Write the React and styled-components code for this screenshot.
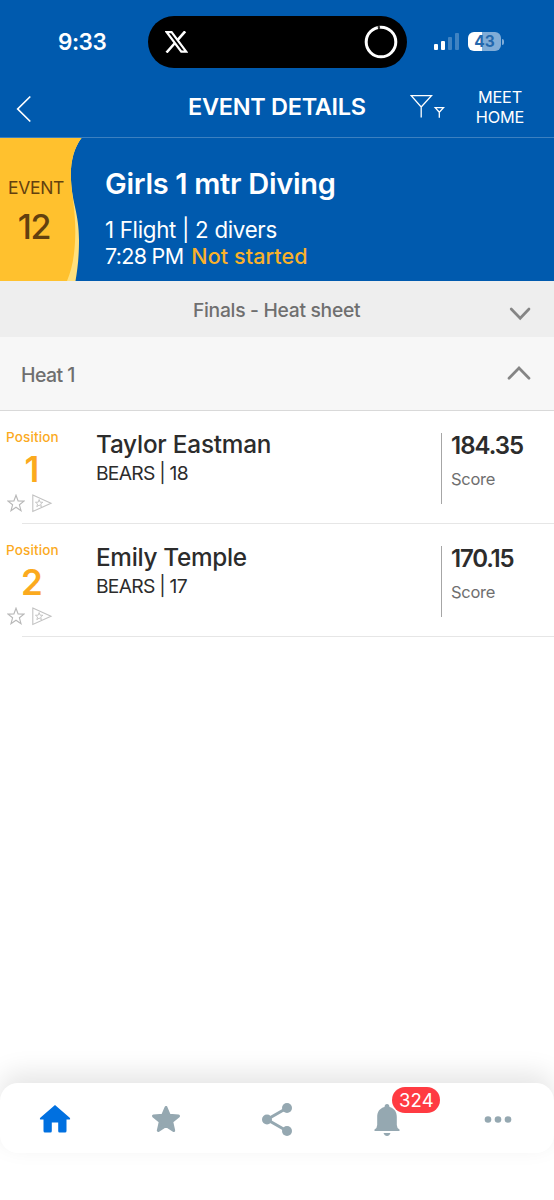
import React from "react";
import styled, { createGlobalStyle } from "styled-components";

const GlobalStyle = createGlobalStyle`
  * { box-sizing: border-box; }
  body { margin: 0; background: #fff; font-family: Inter, "Liberation Sans", sans-serif; }
`;

const Screen = styled.div`
  width: 554px;
  height: 1200px;
  display: flex;
  flex-direction: column;
  background: #fff;
  overflow: hidden;
`;

const Text = styled.span`
  display: block;
  white-space: pre;
  font-size: ${(p) => p.$size}px;
  line-height: ${(p) => p.$line}px;
  font-weight: ${(p) => p.$weight || 400};
  letter-spacing: ${(p) => p.$track || 0}px;
  color: ${(p) => p.$color || "inherit"};
`;

const StatusBar = styled.div`
  height: 83px;
  flex: none;
  display: flex;
  align-items: center;
  padding: 0 50px 0 58px;
  background: #005aae;
  color: #fff;
`;

const Clock = styled.div`
  width: 90px;
`;

const Island = styled.div`
  width: 259px;
  height: 52px;
  border-radius: 26px;
  background: #000;
  display: flex;
  align-items: center;
  justify-content: space-between;
  padding: 0 9px 0 17px;
`;

const Signal = styled.div`
  display: flex;
  align-items: flex-end;
  gap: 3px;
  margin: 0 9px 0 27px;
  height: 17px;
`;

const SignalBar = styled.i`
  width: 4px;
  height: ${(p) => p.$height}px;
  border-radius: 1px;
  background: ${(p) => (p.$on ? "#fff" : "rgba(255,255,255,0.25)")};
`;

const Battery = styled.div`
  width: 33px;
  height: 19px;
  border-radius: 6px;
  background: linear-gradient(90deg, #fff 43%, #80acd7 43%);
  display: flex;
  justify-content: center;
`;

const BatteryTip = styled.i`
  width: 2px;
  height: 6px;
  margin-left: 1px;
  border-radius: 0 3px 3px 0;
  background: #80acd7;
`;

const NavBar = styled.header`
  height: 55px;
  flex: none;
  display: flex;
  padding-left: 16px;
  background: #005aae;
  color: #fff;
  border-bottom: 1px solid #3c80c0;
`;

const BackButton = styled.div`
  width: 172px;
  padding-top: 12px;
`;

const NavTitle = styled.div`
  width: 222px;
  padding-top: 9px;
`;

const FilterButton = styled.div`
  width: 36px;
  padding-top: 11px;
`;

const HomeLink = styled.div`
  width: 108px;
  padding: 5px 0 0;
  text-align: center;
`;

const EventHero = styled.section`
  height: 143px;
  flex: none;
  display: flex;
  background: #005aae;
  color: #fff;
`;

const EventBadge = styled.div`
  position: relative;
  width: 82px;
  color: #62400f;
`;

const BadgeShape = styled.svg`
  position: absolute;
  inset: 0;
`;

const BadgeText = styled.div`
  position: relative;
  width: 72px;
  padding-top: 38px;
  text-align: center;
`;

const EventNumber = styled.div`
  padding-right: 4px;
`;

const EventInfo = styled.div`
  padding: 28px 0 0 23px;
`;

const FlightLine = styled.div`
  padding-top: 14px;
`;

const StatusLine = styled.div`
  display: flex;
  gap: 8px;
`;

const RoundSelector = styled.div`
  height: 56px;
  flex: none;
  display: flex;
  justify-content: space-between;
  padding: 14px 22px 0 193px;
  background: #eeeeee;
`;

const HeatHeader = styled.div`
  height: 74px;
  flex: none;
  display: flex;
  justify-content: space-between;
  padding: 22px 23px 0 21px;
  background: #f7f7f7;
  border-bottom: 1px solid #d9d9d9;
`;

const ChevronBox = styled.div`
  padding-top: ${(p) => p.$top}px;
  line-height: 0;
`;

const Entry = styled.article`
  flex: none;
  height: 113px;
  display: flex;
  background: linear-gradient(#e6e6e6, #e6e6e6) 22px 100% / 100% 1px no-repeat;
`;

const Position = styled.div`
  width: 96px;
  padding: 16px 0 0 6px;
`;

const Rank = styled.div`
  width: 52px;
  text-align: center;
`;

const Marks = styled.div`
  display: flex;
  gap: 7px;
  margin-top: 3px;
  padding-left: 1px;
`;

const Athlete = styled.div`
  width: 345px;
  padding-top: 18px;
`;

const ScoreBox = styled.div`
  height: 71px;
  margin-top: 22px;
  padding-left: 9px;
  border-left: 1px solid #a6a6a6;
`;

const TabBar = styled.nav`
  margin-top: auto;
  height: 70px;
  flex: none;
  display: flex;
  margin-bottom: 47px;
  background: #fff;
  border-radius: 18px;
  box-shadow: 0 -10px 26px rgba(0, 0, 0, 0.1);
`;

const Tab = styled.div`
  position: relative;
  flex: 1;
  display: flex;
  justify-content: center;
  padding-top: 18px;
  color: #95a8b1;
`;

const Badge = styled.div`
  position: absolute;
  left: 60px;
  top: 4px;
  width: 48px;
  height: 26px;
  border-radius: 13px;
  background: #ff3b42;
  color: #fff;
  text-align: center;
`;

const Chevron = ({ up }) => (
  <svg width="24" height="16" viewBox="0 0 24 16" fill="none" stroke="#858585" strokeWidth="2.7" strokeLinecap="round">
    <path d={up ? "M2 13.2 12 3l10 10.2" : "M3.2 3 12.2 12.2 21 3"} />
  </svg>
);

const STAR = "M9 1.2 11.1 6.9 17 7.1 12.4 10.8 14 16.7 9 13.3 4 16.7 5.6 10.8 1 7.1 6.9 6.9Z";

const EntryMarks = () => (
  <Marks>
    <svg width="18" height="18" viewBox="0 0 18 18" fill="none" stroke="#b8b8b8" strokeWidth="1.15">
      <path d={STAR} />
    </svg>
    <svg width="21" height="19" viewBox="0 0 21 19" fill="none" stroke="#c2c2c2" strokeWidth="1.1">
      <path d="M.8 1 19 9.300.8 17.500Z" />
      <path d={STAR} transform="translate(3 5) scale(.46)" strokeWidth="2" />
    </svg>
  </Marks>
);

const entries = [
  { rank: "1", name: "Taylor Eastman", team: "BEARS | 18", score: "184.35", track: -0.2, scoreTrack: -1 },
  { rank: "2", name: "Emily Temple", team: "BEARS | 17", score: "170.15", track: -0.3, scoreTrack: -1.2 },
];

export default function App() {
  return (
    <Screen>
      <GlobalStyle />
      <StatusBar>
        <Clock>
          <Text $size={22.5} $line={30} $weight={600} $track={-0.5}>9:33</Text>
        </Clock>
        <Island>
          <svg width="23" height="22" viewBox="0 0 23 22" fill="none" stroke="#fff">
            <path d="M1.7 1.2H6.6L21.2 20.7H16.3Z" strokeWidth="2.2" />
            <path d="M20.2.3 12.7 8.9M9.5 12.5 1.5 21.5" strokeWidth="2.6" />
          </svg>
          <svg width="34" height="34" viewBox="0 0 34 34" fill="none">
            <circle cx="17" cy="17" r="14.8" stroke="#fff" strokeWidth="3" />
            <path d="M13.8 2.7 16 2.2" stroke="#333" strokeWidth="3" />
          </svg>
        </Island>
        <Signal>
          <SignalBar $height={6} $on />
          <SignalBar $height={9} $on />
          <SignalBar $height={13} />
          <SignalBar $height={17} />
        </Signal>
        <Battery>
          <Text $size={15.5} $line={19} $weight={700} $color="#2468ad">43</Text>
        </Battery>
        <BatteryTip />
      </StatusBar>
      <NavBar>
        <BackButton>
          <svg width="16" height="28" viewBox="0 0 16 28" fill="none" stroke="#fff" strokeWidth="1.7">
            <path d="M14.3 1.5 1.7 14l12.6 12.5" />
          </svg>
        </BackButton>
        <NavTitle>
          <Text $size={23.5} $line={30} $weight={600} $track={-0.3}>EVENT DETAILS</Text>
        </NavTitle>
        <FilterButton>
          <svg width="36" height="25" viewBox="0 0 36 25" fill="none" stroke="#fff" strokeWidth="1.3">
            <path d="M1.2 1.7H21.5L11.2 13ZM11.2 13V23.5" />
            <path d="M25.2 13.6H33.5L29.3 18.3ZM29.3 18.3V23.8" />
          </svg>
        </FilterButton>
        <HomeLink>
          <Text $size={16.3} $line={19.5} $track={-0.15}>{"MEET\nHOME"}</Text>
        </HomeLink>
      </NavBar>
      <EventHero>
        <EventBadge>
          <BadgeShape width="82" height="143" viewBox="0 0 82 143">
            <path d="M0 0H81.5C73 11 70 27 71 42C72 65 79 75 79 102C79 120 77.500 131 75.500 143H0Z" fill="#ffe07c" />
            <path d="M0 0H81.5C73 11 70 27 71 42C72 60 75.500 72 75.300 95C75 117 72 131 67 143H0Z" fill="#ffc12e" />
          </BadgeShape>
          <BadgeText>
            <Text $size={17.5} $line={24} $track={-0.35}>EVENT</Text>
            <EventNumber>
              <Text $size={34} $line={54} $weight={500} $track={-1.2}>12</Text>
            </EventNumber>
          </BadgeText>
        </EventBadge>
        <EventInfo>
          <Text $size={29} $line={36} $weight={600} $track={-0.3}>Girls 1 mtr Diving</Text>
          <FlightLine>
            <Text $size={22.3} $line={27} $track={-0.3}>1 Flight | 2 divers</Text>
          </FlightLine>
          <StatusLine>
            <Text $size={21.5} $line={27} $track={-0.7}>7:28 PM</Text>
            <Text $size={21.5} $line={27} $weight={500} $color="#f9b12a" $track={0.1}>Not started</Text>
          </StatusLine>
        </EventInfo>
      </EventHero>
      <RoundSelector>
        <Text $size={19.3} $line={30} $weight={500} $color="#6f6f6f" $track={-0.3}>Finals - Heat sheet</Text>
        <ChevronBox $top={11}><Chevron /></ChevronBox>
      </RoundSelector>
      <HeatHeader>
        <Text $size={19.5} $line={32} $weight={500} $color="#6f6f6f" $track={-0.55}>Heat 1</Text>
        <ChevronBox $top={6}><Chevron up /></ChevronBox>
      </HeatHeader>
      {entries.map((e) => (
        <Entry key={e.rank}>
          <Position>
            <Text $size={13.5} $line={20} $weight={500} $color="#fbaa1e" $track={0.15}>Position</Text>
            <Rank>
              <Text $size={35} $line={44} $weight={600} $color="#fbaa1e">{e.rank}</Text>
            </Rank>
            <EntryMarks />
          </Position>
          <Athlete>
            <Text $size={24.3} $line={30} $weight={500} $color="#2c2c2c" $track={e.track}>{e.name}</Text>
            <Text $size={19.3} $line={28} $color="#2c2c2c" $track={-0.75}>{e.team}</Text>
          </Athlete>
          <ScoreBox>
            <Text $size={24} $line={26} $weight={600} $color="#2c2c2c" $track={e.scoreTrack}>{e.score}</Text>
            <Text $size={16.5} $line={41} $color="#6f6f6f" $track={-0.3}>Score</Text>
          </ScoreBox>
        </Entry>
      ))}
      <TabBar>
        <Tab>
          <svg width="32" height="36" viewBox="0 0 32 36">
            <path d="M16 4 31 17Q31.500 18.500 30.500 18.500H27.500V30Q27.500 31.500 26 31.500H20.500Q19.200 31.500 19.200 30V21.500H12.800V30Q12.800 31.500 11.500 31.500H6Q4.500 31.500 4.500 30V18.500H1.500Q.5 18.500 1 17Z" fill="#0070e0" />
          </svg>
        </Tab>
        <Tab>
          <svg width="32" height="36" viewBox="0 0 32 36" fill="currentColor" stroke="currentColor" strokeWidth="3" strokeLinejoin="round">
            <path d="M16 6.500 19.200 14.200 28.500 15 21.700 20.700 23.700 29.500 16 24.500 8.300 29.500 10.300 20.700 3.500 15 12.800 14.200Z" />
          </svg>
        </Tab>
        <Tab>
          <svg width="32" height="36" viewBox="0 0 32 36" fill="currentColor" stroke="currentColor">
            <path d="M26 7 6 18.500 26 30" fill="none" strokeWidth="3" />
            <g stroke="none">
              <circle cx="26" cy="7" r="5" />
              <circle cx="6" cy="18.500" r="5" />
              <circle cx="26" cy="30" r="5" />
            </g>
          </svg>
        </Tab>
        <Tab>
          <svg width="34" height="36" viewBox="0 0 34 36" fill="currentColor">
            <path d="M16 3Q18.300 3 18.500 6C23.500 7.300 25.800 11 25.800 16V24Q25.800 27 28.500 28.500V30H3.500V28.500Q6.200 27 6.200 24V16C6.200 11 8.500 7.300 13.500 6Q13.700 3 16 3Z" />
            <path d="M12.500 32H19.500Q18.500 35 16 35Q13.500 35 12.500 32Z" />
          </svg>
          <Badge>
            <Text $size={18.5} $line={26} $track={0.1}>324</Text>
          </Badge>
        </Tab>
        <Tab>
          <svg width="34" height="36" viewBox="0 0 34 36" fill="currentColor">
            <circle cx="6" cy="18.500" r="3.300" />
            <circle cx="16" cy="18.500" r="3.300" />
            <circle cx="26" cy="18.500" r="3.300" />
          </svg>
        </Tab>
      </TabBar>
    </Screen>
  );
}
